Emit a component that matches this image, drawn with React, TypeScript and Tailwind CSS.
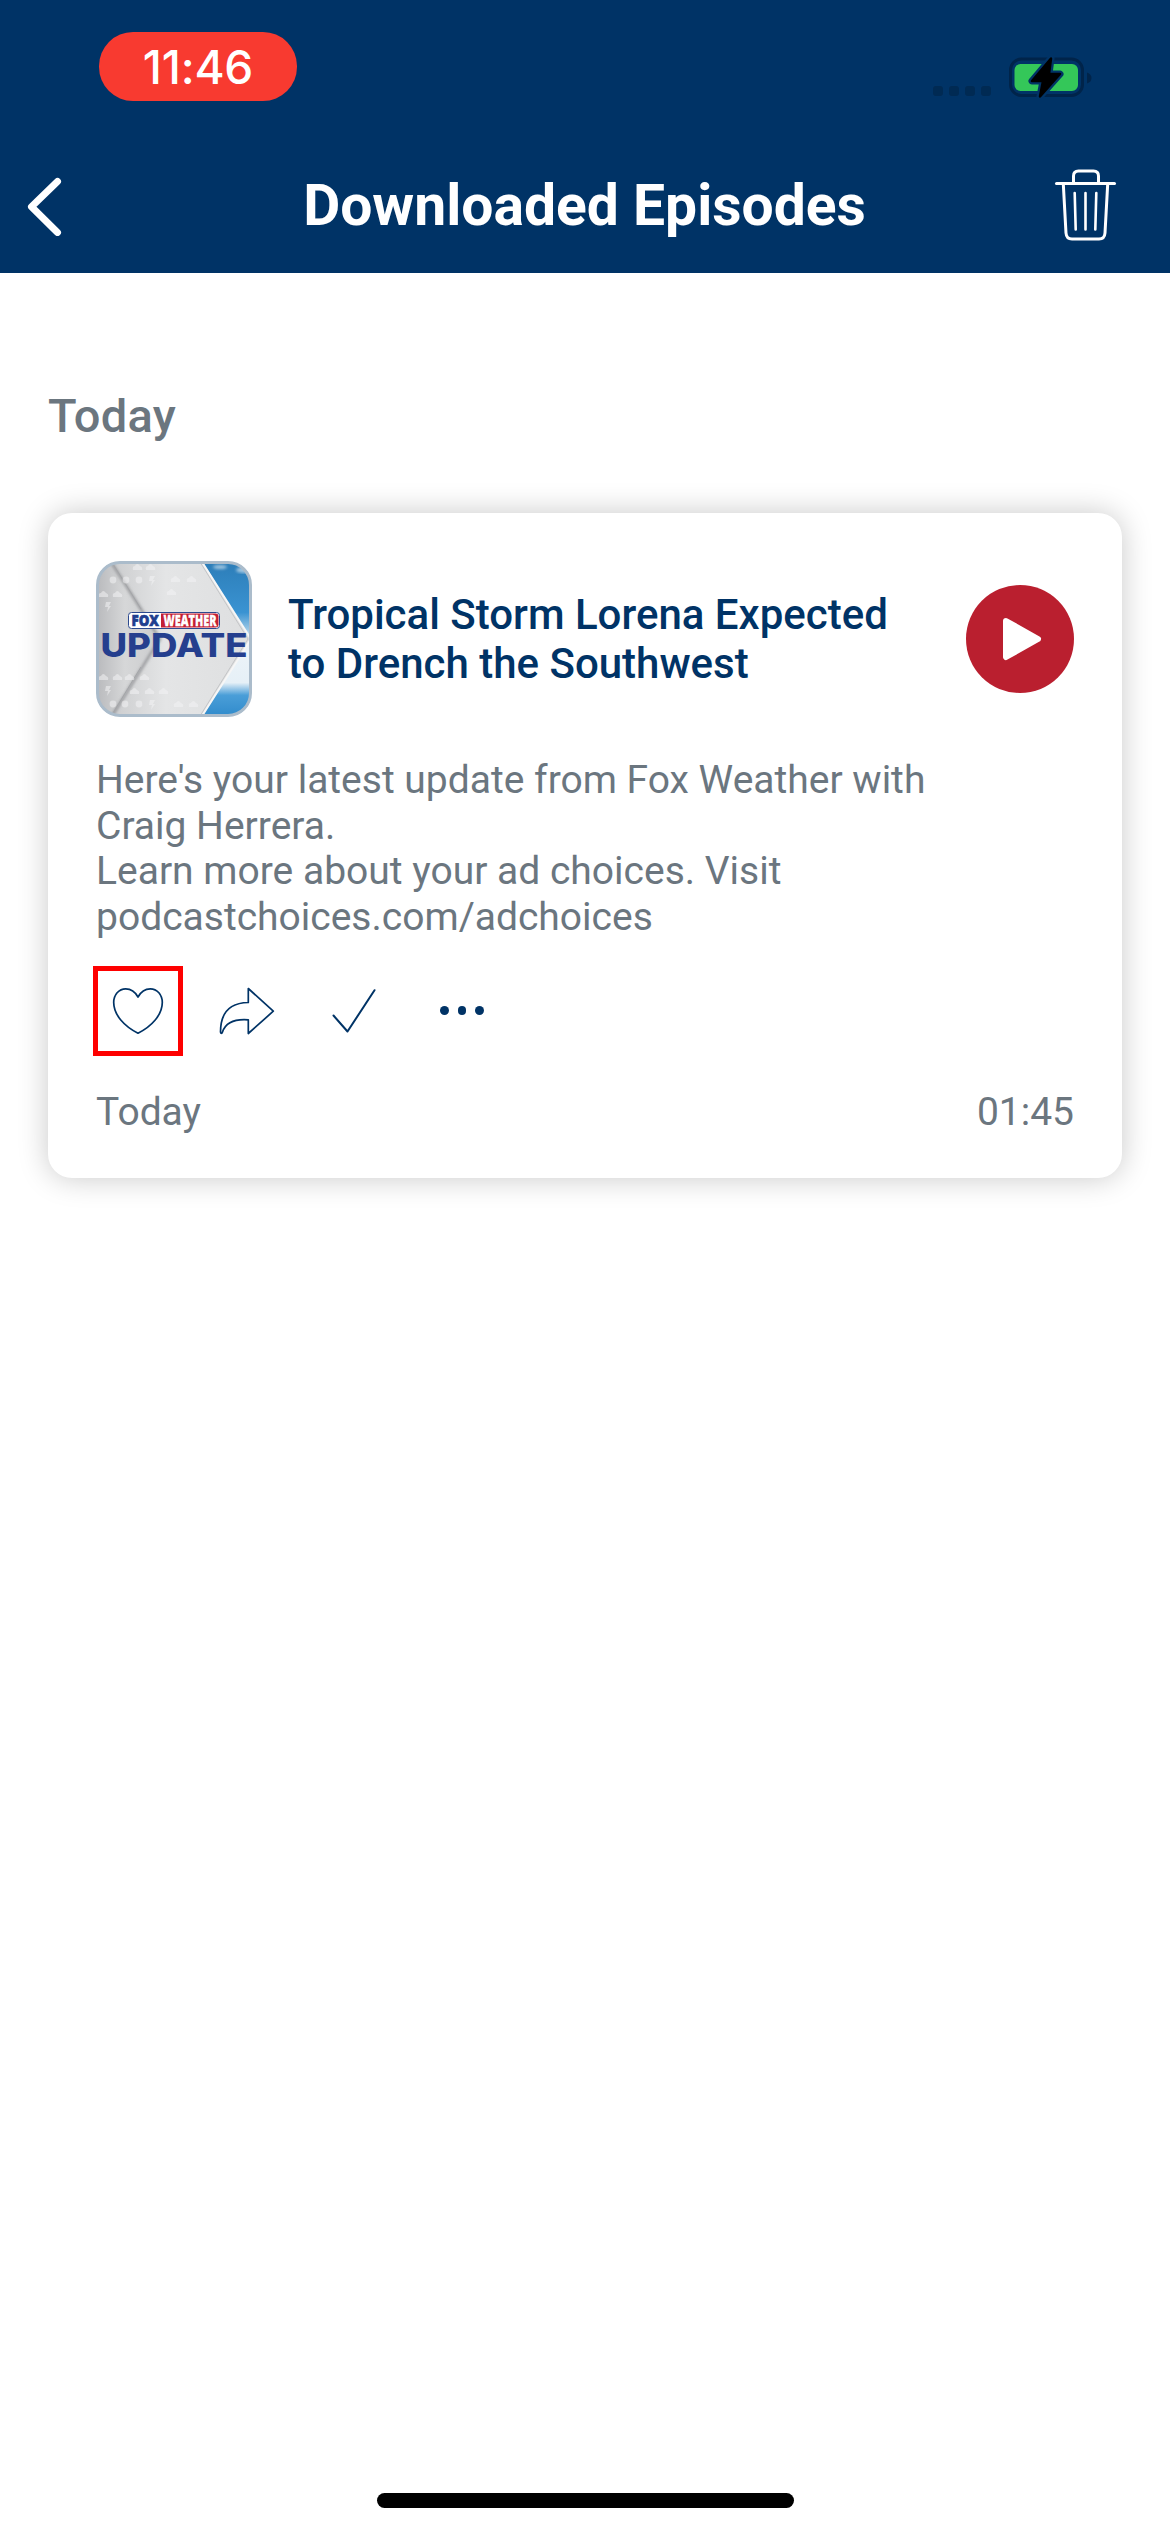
import React from "react";

function StatusBar() {
  return (
    <div className="flex h-[135px] items-start justify-between pl-[99px] pr-[77px] pt-8">
      <div className="flex h-[69px] w-[198px] items-center justify-center rounded-[34px] bg-[#f83a30]">
        <span className="font-['Inter'] text-[46px] font-medium leading-none tracking-[-0.2px] text-white">11:46</span>
      </div>
      <div className="flex pt-[25px]">
        <div className="mr-[18px] mt-[29px] flex gap-1.5">
          {[0, 1, 2, 3].map((i) => (
            <span key={i} className="size-2.5 rounded-[3px] bg-[#002a53]" />
          ))}
        </div>
        <svg width="84" height="42" viewBox="0 0 84 42">
          <rect x="1.5" y="2" width="72" height="36.5" rx="11" fill="none" stroke="#00244a" strokeWidth="3" />
          <path d="M78 15.500q4.500 1.500 4.500 5.500t-4.500 5.500z" fill="#00244a" />
          <rect x="5.500" y="7" width="63.500" height="27" rx="6" fill="#34c759" />
          <path
            d="M42 1.500 23 24H34L31 39.500 51 17H40Z"
            fill="#003366"
            stroke="#003366"
            strokeWidth="7"
            strokeLinejoin="round"
          />
          <path
            d="M42 1.500 23 24H34L31 39.500 51 17H40Z"
            fill="#000"
            stroke="#000"
            strokeWidth="2.500"
            strokeLinejoin="round"
          />
        </svg>
      </div>
    </div>
  );
}

function NavBar() {
  return (
    <div className="flex h-[138px] items-center justify-between pl-[26px] pr-[53px]">
      <svg width="90" height="64" viewBox="0 0 90 64" fill="none" stroke="#fff" strokeWidth="7" strokeLinecap="round" strokeLinejoin="round">
        <path d="M31.500 9.500 5.500 34.700 31.500 60.500" />
      </svg>
      <h1 className="pt-[3px] font-['Roboto'] text-[57px] font-bold leading-none text-white">Downloaded Episodes</h1>
      <svg width="64" height="74" viewBox="0 0 64 74" fill="none" stroke="#fff" strokeWidth="3" strokeLinecap="round" strokeLinejoin="round">
        <path d="M3.500 16.500H61.500" />
        <path d="M20.500 16V9q0-5 5-5h15q5 0 5 5v7" />
        <path d="M10.300 17 13 66q.4 6 6 6h27q5.600 0 6-6l2.700-49" />
        <path d="M21.700 26 22.700 62.500M32.500 26V62.500M43.300 26 42.300 62.500" strokeWidth="2.600" />
      </svg>
    </div>
  );
}

function CoverArt() {
  return (
    <svg className="shrink-0" width="156" height="156" viewBox="0 0 156 156">
      <defs>
        <clipPath id="frame">
          <rect x="1" y="1" width="154" height="154" rx="22" />
        </clipPath>
        <linearGradient id="sky" x1="0" y1="0" x2="0" y2="1">
          <stop offset="0" stopColor="#2c7db8" />
          <stop offset="0.330" stopColor="#3a93d2" />
          <stop offset="0.440" stopColor="#9cc8e6" />
          <stop offset="0.500" stopColor="#eef4f8" />
          <stop offset="0.780" stopColor="#e6f0f7" />
          <stop offset="0.860" stopColor="#4a9ed8" />
          <stop offset="1" stopColor="#2f8acb" />
        </linearGradient>
        <linearGradient id="panel" x1="0" y1="0" x2="1" y2="0">
          <stop offset="0" stopColor="#c4c5c7" />
          <stop offset="0.450" stopColor="#e4e5e6" />
          <stop offset="1" stopColor="#dedfe0" />
        </linearGradient>
        <linearGradient id="fold" x1="0" y1="0" x2="1" y2="0">
          <stop offset="0" stopColor="#b8b9bc" />
          <stop offset="0.450" stopColor="#d6d7d8" />
          <stop offset="1" stopColor="#cbccce" />
        </linearGradient>
        <filter id="soft">
          <feGaussianBlur stdDeviation="1.500" />
        </filter>
      </defs>
      <g clipPath="url(#frame)">
        <rect width="156" height="156" fill="url(#sky)" />
        <g fill="#fff" filter="url(#soft)" opacity="0.550">
          <ellipse cx="124" cy="6" rx="7" ry="2" />
          <ellipse cx="148" cy="9" rx="8" ry="3" />
        </g>
        <path d="M0 0H106L155 78 106 156H0Z" fill="url(#panel)" />
        <path d="M106 1 155 78 106 155" fill="none" stroke="#f6f6f6" strokeWidth="2" />
        <path d="M104 1 152 78 104 155" fill="none" stroke="#c4c5c7" strokeWidth="1" />
        <path d="M0 0H15L64 78 16 156H0Z" fill="url(#fold)" />
        <path d="M15 1 64 78 16 155" fill="none" stroke="#85868a" strokeWidth="2" filter="url(#soft)" />
        <path d="M17 3 45 48M17 152 45 106" fill="none" stroke="#a4a5a8" strokeWidth="1" />
        <g fill="#f3f3f4" opacity="0.550">
          {[
            [41, 6], [54, 6], [79, 18], [95, 18], [7, 33], [21, 33], [75, 31],
            [7, 116], [21, 116], [38, 130], [53, 130], [67, 130], [82, 143], [97, 143], [33, 116], [48, 116],
          ].map(([x, y]) => (
            <path key={`${x}-${y}`} d={`M${x - 4} ${y + 3}q-1-4 2-4 2-4 5 0 3 1 2 4z`} />
          ))}
          {[[17, 19], [30, 19], [43, 19], [29, 143], [43, 143], [17, 143]].map(([x, y]) => (
            <circle key={`${x}-${y}`} cx={x} cy={y} r="3.400" />
          ))}
          {[[56, 19], [12, 45], [12, 129], [56, 143]].map(([x, y]) => (
            <path key={`${x}-${y}`} d={`M${x - 2} ${y - 4}h5l-2 4h2l-4 6 1-5h-3z`} />
          ))}
        </g>
        <rect x="32.500" y="51.500" width="91" height="16" rx="3" fill="#fff" stroke="#2c4a8f" strokeWidth="1" />
        <path d="M65 52.500h54.500q3 0 3 3v8q0 3-3 3H65z" fill="#c41f34" />
        <text x="35.500" y="65.300" textLength="27.500" lengthAdjust="spacingAndGlyphs" fontFamily="Open Sans" fontSize="16.500" fontWeight="800" fill="#1f3f8f" stroke="#1f3f8f" strokeWidth="0.700">FOX</text>
        <text x="67.500" y="65.300" textLength="53" lengthAdjust="spacingAndGlyphs" fontFamily="Open Sans" fontSize="16.500" fontWeight="800" fill="#fff" stroke="#fff" strokeWidth="0.300">WEATHER</text>
        <text x="4.500" y="95.700" textLength="147" lengthAdjust="spacingAndGlyphs" fontFamily="Inter" fontSize="32.500" fontWeight="800" fill="#253f8e">UPDATE</text>
      </g>
      <rect x="1.500" y="1.500" width="153" height="153" rx="22.500" fill="none" stroke="#abbccb" strokeWidth="3" />
    </svg>
  );
}

function Actions() {
  return (
    <div className="-ml-[3px] mt-[25px] flex h-[90px] items-center">
      <div className="flex h-[90px] w-[90px] items-center justify-center border-[5px] border-[#fe0000]">
        <svg width="52" height="48" viewBox="0 0 52 48" fill="none" stroke="#003366" strokeWidth="1.700" strokeLinejoin="round">
          <path d="M26 10C22.500 3.500 18 1.800 13.700 1.800 6.800 1.800 1.700 7.800 1.700 15.500 1.700 28 12.500 39.500 26 46.200 39.500 39.500 50.300 28 50.300 15.500 50.300 7.800 45.200 1.800 38.300 1.800 34 1.800 29.500 3.500 26 10Z" />
        </svg>
      </div>
      <svg className="ml-[36px]" width="56" height="48" viewBox="0 0 56 48" fill="none" stroke="#003366" strokeWidth="1.700" strokeLinejoin="round">
        <path d="M29.300 1.500 54.300 24.200 29.300 46.500V32.800C16 31.800 7 34.500 3.500 45 3 46.700 1.500 46.700 1.500 45 1.500 27 9.500 15.800 29.300 15.500Z" />
      </svg>
      <svg className="ml-[57px]" width="44" height="46" viewBox="0 0 44 46" fill="none" stroke="#003366" strokeWidth="2" strokeLinecap="round" strokeLinejoin="round">
        <path d="M1.500 27.500 15.500 43.500 42.500 2.200" />
      </svg>
      <div className="ml-[64px] flex gap-[9px]">
        {[0, 1, 2].map((i) => (
          <span key={i} className="size-[8.700px] rounded-full bg-[#003366]" />
        ))}
      </div>
    </div>
  );
}

function EpisodeCard() {
  return (
    <article className="mt-[54px] flex h-[665px] flex-col rounded-[24px] bg-white p-12 shadow-[0_0_30px_rgba(0,0,0,0.22)]">
      <div className="flex items-center">
        <CoverArt />
        <h3 className="ml-9 flex-1 whitespace-nowrap font-['Roboto'] text-[42px] font-medium leading-[49px] text-[#003366]">
          Tropical Storm Lorena Expected
          <br />
          to Drench the Southwest
        </h3>
        <svg width="108" height="108" viewBox="0 0 108 108">
          <circle cx="54" cy="54" r="54" fill="#ba1f2f" />
          <path d="M40 36 72 54 40 72Z" fill="#fff" stroke="#fff" strokeWidth="6" strokeLinejoin="round" />
        </svg>
      </div>
      <p className="mt-[41px] whitespace-nowrap font-['Roboto'] text-[39px] leading-[45.700px] text-[#6b767f]">
        Here's your latest update from Fox Weather with
        <br />
        Craig Herrera.
        <br />
        Learn more about your ad choices. Visit
        <br />
        podcastchoices.com/adchoices
      </p>
      <Actions />
      <div className="mt-[33px] flex justify-between font-['Roboto'] text-[39px] leading-[46px] text-[#6b767f]">
        <span>Today</span>
        <span>01:45</span>
      </div>
    </article>
  );
}

export default function App() {
  return (
    <div className="flex h-[2532px] w-[1170px] flex-col overflow-hidden bg-white">
      <header className="h-[273px] bg-[#003366]">
        <StatusBar />
        <NavBar />
      </header>
      <main className="flex-1 px-12 pt-[115px]">
        <h2 className="h-[71px] font-['Roboto'] text-[47px] font-medium leading-[55px] tracking-[0.3px] text-[#6b767f]">Today</h2>
        <EpisodeCard />
      </main>
      <div className="mb-6 h-[15px] w-[417px] self-center rounded-full bg-black" />
    </div>
  );
}
